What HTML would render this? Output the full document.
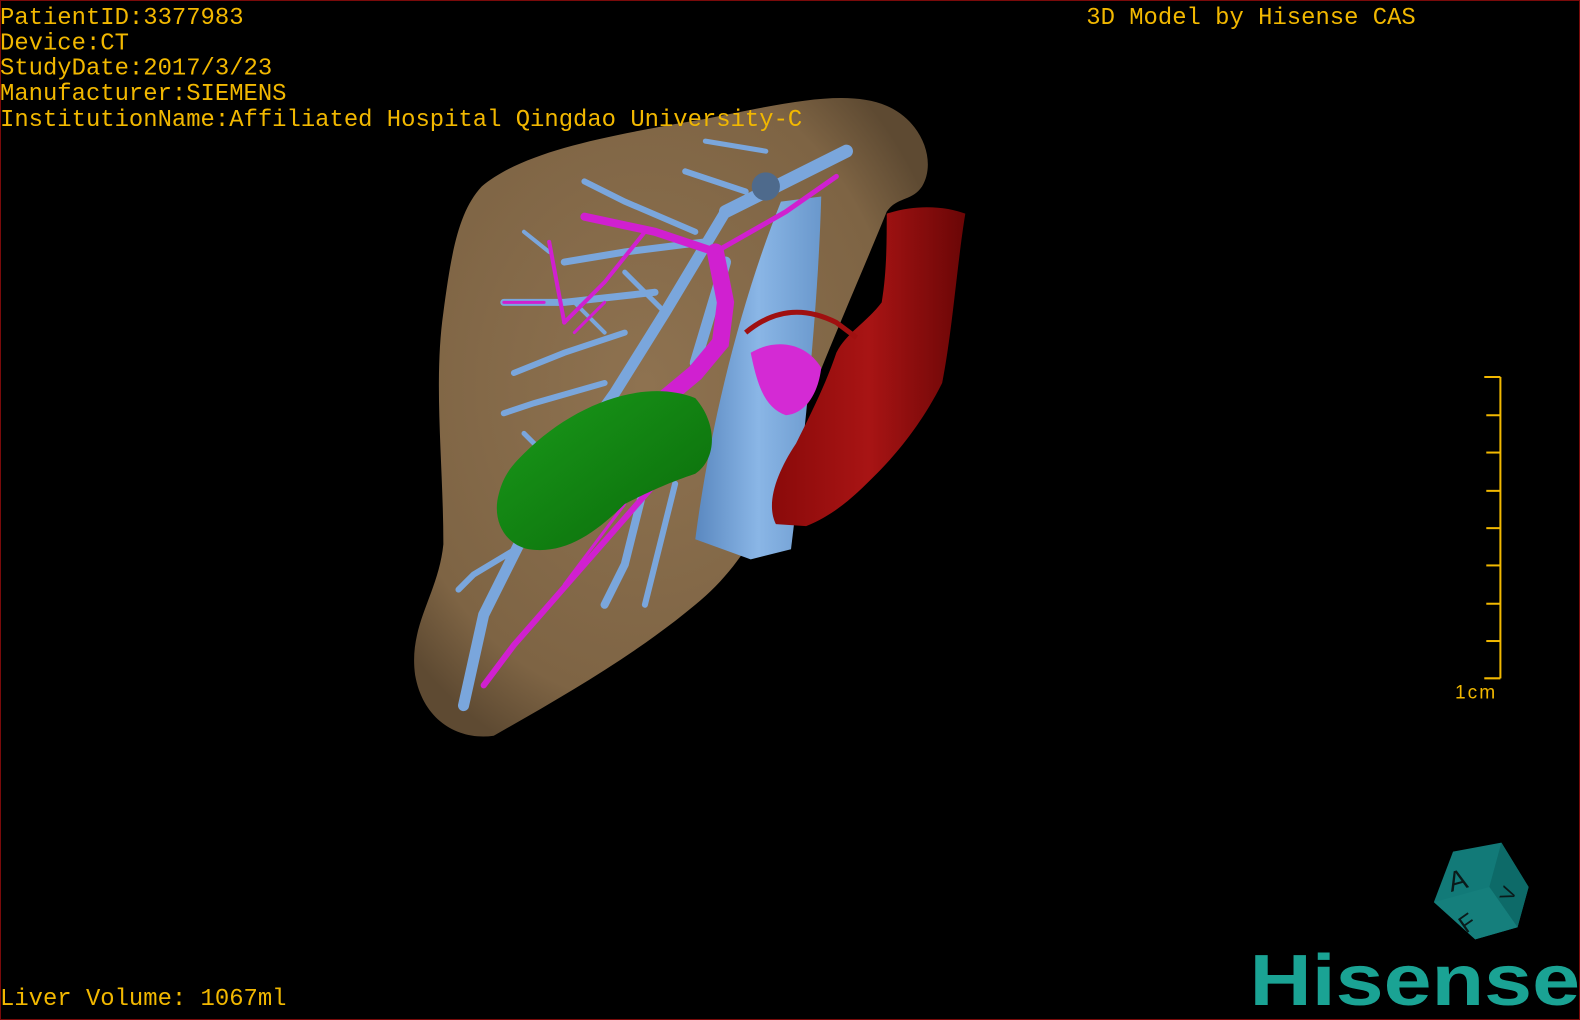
<!DOCTYPE html>
<html><head><meta charset="utf-8"><style>
html,body{margin:0;padding:0;background:#000;}
body{width:1580px;height:1020px;overflow:hidden;position:relative;}
svg{position:absolute;left:0;top:0;}
</style></head><body>
<svg width="1580" height="1020" viewBox="0 0 1568 1012" preserveAspectRatio="none" xmlns="http://www.w3.org/2000/svg">
<defs>
<radialGradient id="lv" cx="0.45" cy="0.45" r="0.62"><stop offset="0" stop-color="#8e7250"/><stop offset="0.8" stop-color="#7e6444"/><stop offset="1" stop-color="#5e4a32"/></radialGradient>
<linearGradient id="gr" x1="0" y1="0" x2="1" y2="1"><stop offset="0" stop-color="#1a9a1a"/><stop offset="1" stop-color="#0a6a0a"/></linearGradient>
<linearGradient id="rd" x1="0" y1="0" x2="1" y2="0"><stop offset="0" stop-color="#8a0a0a"/><stop offset="0.5" stop-color="#a81414"/><stop offset="1" stop-color="#6a0606"/></linearGradient>
<linearGradient id="ivc" x1="0" y1="0" x2="1" y2="0"><stop offset="0" stop-color="#5a88c0"/><stop offset="0.5" stop-color="#8ab6e6"/><stop offset="1" stop-color="#6a98cc"/></linearGradient>
</defs>
<rect x="0" y="0" width="1568" height="1012" fill="#000" stroke="#7a0a0a" stroke-width="2"/>
<path d="M478,185 C520,150 600,135 700,118 C780,102 840,88 880,105 C915,120 930,160 915,185 C905,200 890,195 880,210 C860,260 820,350 790,430 C770,500 740,560 690,600 C630,650 560,690 490,730 C455,735 420,715 412,670 C405,620 435,590 440,540 C440,460 430,380 440,310 C448,250 455,210 478,185 Z" fill="url(#lv)"/>
<g stroke="#7aa6dc" stroke-linecap="round" fill="none">
<path d="M720,210 L840,150" stroke-width="13"/>
<path d="M720,210 L660,310 L610,390 L560,460 L515,540 L480,610 L460,700" stroke-width="11"/>
<path d="M700,240 L620,250 L560,260" stroke-width="7"/>
<path d="M650,290 L560,300 L500,300" stroke-width="7"/>
<path d="M620,330 L560,350 L510,370" stroke-width="6"/>
<path d="M600,380 L530,400 L500,410" stroke-width="6"/>
<path d="M690,230 L620,200 L580,180" stroke-width="6"/>
<path d="M740,190 L680,170" stroke-width="6"/>
<path d="M660,310 L620,270" stroke-width="5"/>
<path d="M640,480 L620,560 L600,600" stroke-width="8"/>
<path d="M670,480 L640,600" stroke-width="6"/>
<path d="M520,540 L470,570 L455,585" stroke-width="6"/>
<path d="M560,470 L520,430" stroke-width="5"/>
<path d="M720,260 L690,360" stroke-width="11"/>
<path d="M545,250 L520,230" stroke-width="4"/>
<path d="M600,330 L570,300" stroke-width="4"/>
<path d="M700,140 L760,150" stroke-width="5"/>
</g>
<path d="M775,200 L815,195 C812,300 800,420 785,545 L745,555 L690,535 C705,420 735,300 775,200 Z" fill="url(#ivc)"/>
<circle cx="760" cy="185" r="14" fill="#4e6a8c"/>
<g stroke="#d020d0" stroke-linecap="round" fill="none">
<path d="M580,215 L650,230 L710,250" stroke-width="8"/>
<path d="M710,250 L720,300 L715,340 L690,370 L660,395" stroke-width="17"/>
<path d="M710,250 L780,210 L830,175" stroke-width="5"/>
<path d="M640,230 L600,280 L560,320" stroke-width="4"/>
<path d="M560,320 L545,240" stroke-width="4"/>
<path d="M650,480 L580,560 L510,640 L480,680" stroke-width="6"/>
<path d="M620,500 L560,580" stroke-width="3"/>
<path d="M540,300 L500,300" stroke-width="3"/>
<path d="M600,300 L570,330" stroke-width="3"/>
</g>
<path d="M745,350 C770,335 800,340 815,365 C812,390 800,410 780,412 C760,405 752,385 745,350 Z" fill="#d42ad4"/>
<path d="M520,450 C570,400 640,375 690,395 C712,420 712,455 690,470 C660,480 640,490 620,500 C590,530 560,550 525,545 C500,540 488,515 495,490 C500,470 510,460 520,450 Z" fill="url(#gr)"/>
<path d="M880,212 C910,202 940,205 958,212 C950,260 945,330 935,380 C915,420 890,450 870,470 C850,490 830,510 800,522 L770,520 C760,500 770,470 790,440 C805,410 820,380 830,350 C840,330 860,320 875,300 C880,270 880,240 880,212 Z" fill="url(#rd)"/>
<path d="M740,330 C770,305 800,305 830,320 L850,335" stroke="#a01010" stroke-width="5" fill="none"/>
<g font-family="'Liberation Mono',monospace" font-size="23.7" fill="#f2b800">
<text x="0" y="24">PatientID:3377983</text>
<text x="0" y="49">Device:CT</text>
<text x="0" y="74">StudyDate:2017/3/23</text>
<text x="0" y="99">Manufacturer:SIEMENS</text>
<text x="0" y="125">InstitutionName:Affiliated Hospital Qingdao University-C</text>
<text x="1078" y="24">3D Model by Hisense CAS</text>
<text x="0" y="997">Liver Volume: 1067ml</text>
</g>
<g stroke="#f2b800" stroke-width="2">
<line x1="1489" y1="374" x2="1489" y2="673"/>
<line x1="1473" y1="374" x2="1489" y2="374"/>
<line x1="1475" y1="412" x2="1489" y2="412"/>
<line x1="1475" y1="449" x2="1489" y2="449"/>
<line x1="1475" y1="487" x2="1489" y2="487"/>
<line x1="1475" y1="524" x2="1489" y2="524"/>
<line x1="1475" y1="561" x2="1489" y2="561"/>
<line x1="1475" y1="599" x2="1489" y2="599"/>
<line x1="1475" y1="636" x2="1489" y2="636"/>
<line x1="1473" y1="673" x2="1489" y2="673"/>
</g>
<text x="1444" y="693" font-family="'Liberation Sans',sans-serif" font-size="19" fill="#f2b800" letter-spacing="2">1cm</text>
<polygon points="1442,845 1490,836 1517,880 1506,920 1464,932 1423,895" fill="#127a78"/>
<polygon points="1490,836 1517,880 1506,920 1478,880" fill="#0d6a68"/>
<polygon points="1423,895 1478,880 1506,920 1464,932" fill="#157f7c"/>
<text x="1437" y="882" font-family="'Liberation Sans',sans-serif" font-size="28" fill="#0a1a1a" transform="rotate(-15 1450 872)">A</text>
<text x="1488" y="893" font-family="'Liberation Sans',sans-serif" font-size="20" fill="#0a1a1a" transform="rotate(-70 1496 885)">V</text>
<text x="1447" y="922" font-family="'Liberation Sans',sans-serif" font-size="24" fill="#0a1a1a" transform="rotate(-35 1458 912)">F</text>
<text x="1240" y="997" font-family="'Liberation Sans',sans-serif" font-weight="bold" font-size="72" fill="#1aa394" textLength="328" lengthAdjust="spacingAndGlyphs">Hisense</text>
</svg>
</body></html>
